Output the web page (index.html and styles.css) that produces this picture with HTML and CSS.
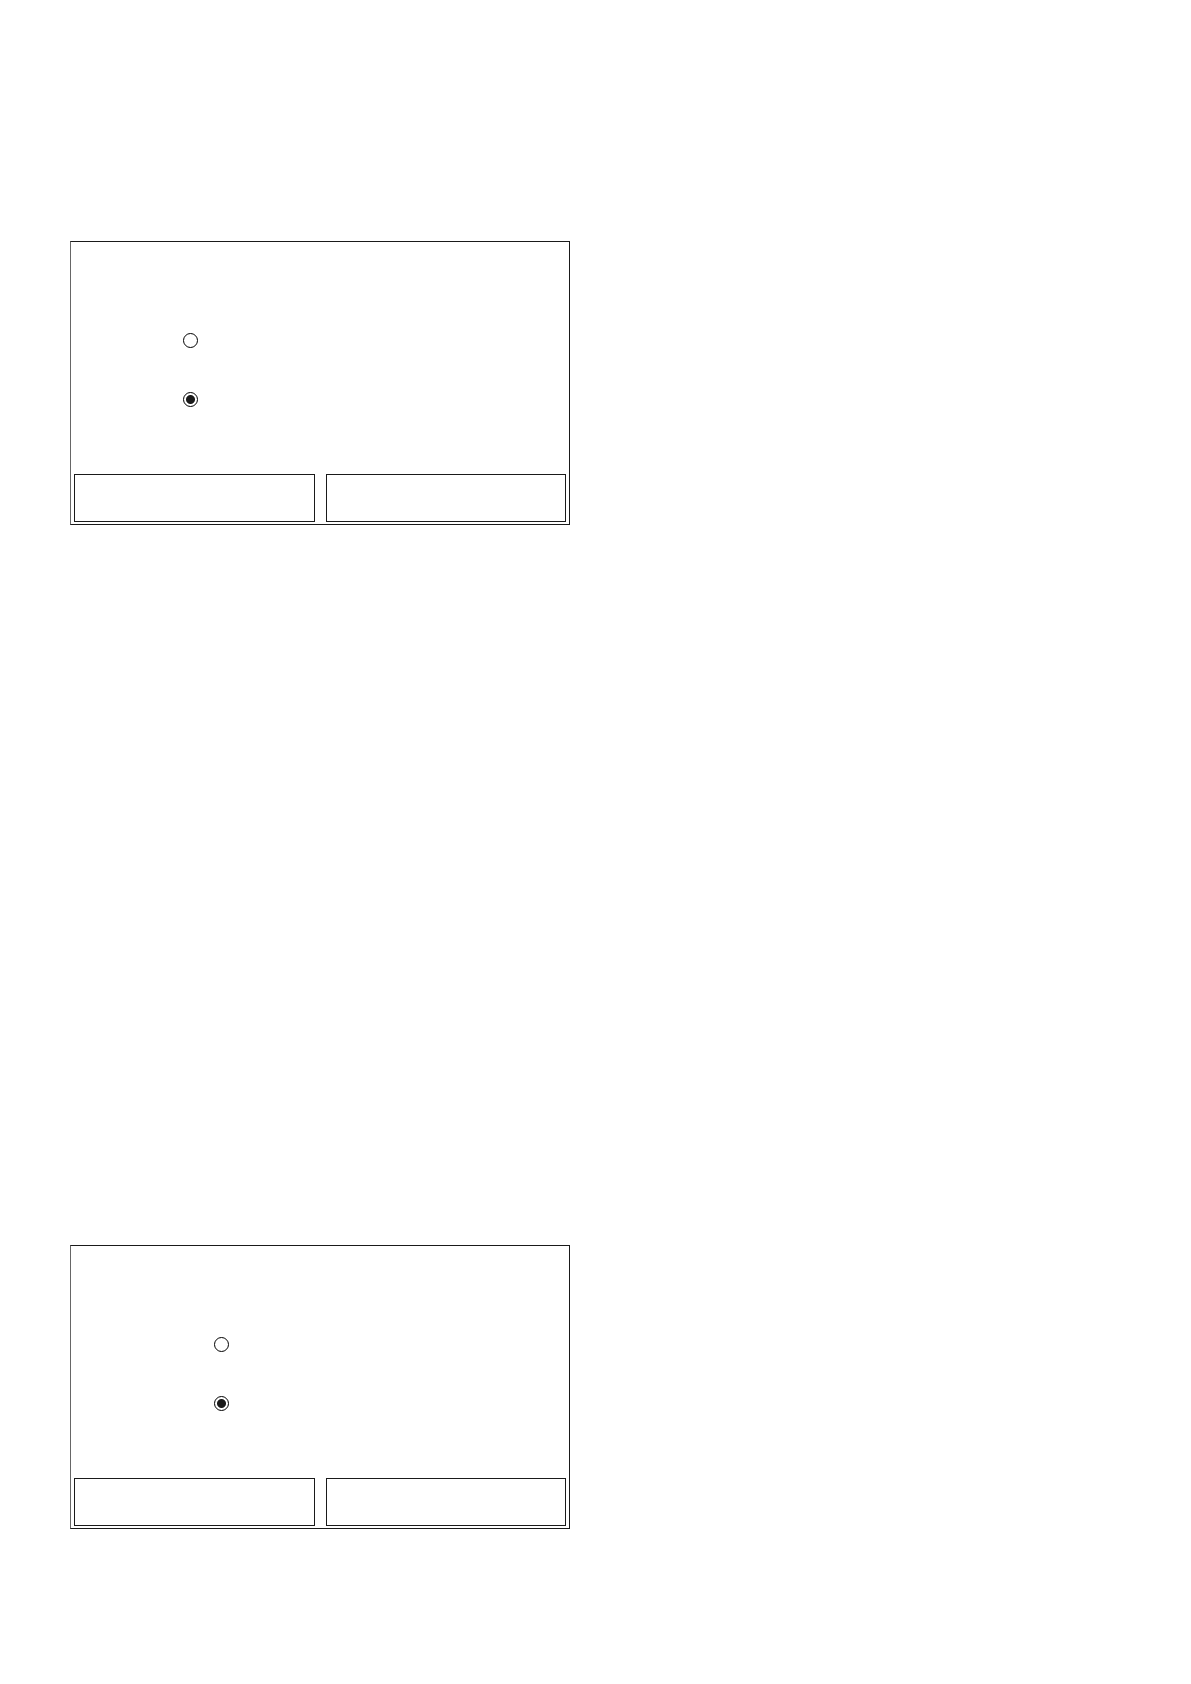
FILE: index.html
```html
<!DOCTYPE html>
<html lang="en">
<head>
    <meta charset="UTF-8">
    <meta name="viewport" content="width=device-width, initial-scale=1.0">
    <title>Dialogs</title>
    <link rel="stylesheet" href="styles.css">
</head>
<body>
    <main class="page">
        <!-- First dialog -->
        <form class="dialog">
            <div class="options">
                <input class="option" type="radio" name="first" aria-label="Option 1">
                <input class="option" type="radio" name="first" aria-label="Option 2" checked>
            </div>
            <div class="actions">
                <button class="action-btn" type="button" aria-label="Left button"></button>
                <button class="action-btn" type="button" aria-label="Right button"></button>
            </div>
        </form>

        <!-- Second dialog -->
        <form class="dialog">
            <div class="options options-inset">
                <input class="option" type="radio" name="second" aria-label="Option 1">
                <input class="option" type="radio" name="second" aria-label="Option 2" checked>
            </div>
            <div class="actions">
                <button class="action-btn" type="button" aria-label="Left button"></button>
                <button class="action-btn" type="button" aria-label="Right button"></button>
            </div>
        </form>
    </main>
</body>
</html>
```
FILE: styles.css
```css
/* General styles */
* {
    box-sizing: border-box;
}

body {
    font-family: "Liberation Sans", Arial, sans-serif;
    background: #fff;
    margin: 0;
    color: #1a1a1a;
}

/* Two column page, dialogs go in the left one */
.page {
    display: grid;
    grid-template-columns: 1fr 1fr;
    column-gap: 51px;
    row-gap: 720px;
    padding: 241px 70px 80px;
}

/* Dialog */
.dialog {
    grid-column: 1;
    display: flex;
    flex-direction: column;
    justify-content: space-between;
    min-height: 284px;
    padding: 0 3px 2px;
    border: 1px solid #1a1a1a;
    border-left-color: #666;
}

/* Radio options */
.options {
    display: flex;
    flex-direction: column;
    gap: 44px;
    padding: 91px 0 0 109px;
}

.options-inset {
    padding-left: 140px;
}

.option {
    appearance: none;
    width: 15px;
    height: 15px;
    margin: 0;
    border: 1px solid #000;
    border-radius: 50%;
    background: #fff;
}

.option:checked {
    background: radial-gradient(circle, #1a1a1a 4px, #fff 5px);
}

/* Bottom buttons */
.actions {
    display: flex;
    gap: 11px;
}

.action-btn {
    flex: 1;
    height: 48px;
    padding: 0;
    border: 1px solid #1a1a1a;
    border-radius: 0;
    background: #fff;
    cursor: pointer;
}
```
